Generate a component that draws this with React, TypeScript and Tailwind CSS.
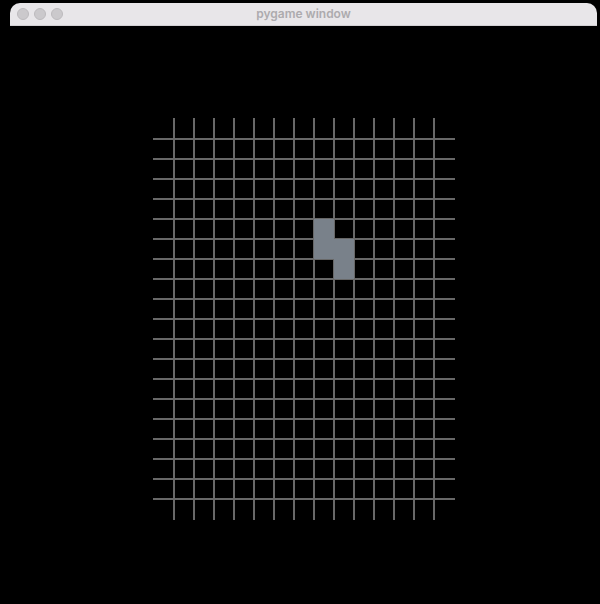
import React from "react";

// board geometry, as pygame draws it
const CELL = 20;
const COLS = 15;
const ROWS = 20;
const piece: [number, number][] = [
  [8, 5],
  [8, 6],
  [9, 6],
  [9, 7],
];

function Board() {
  const w = COLS * CELL + 2;
  const h = ROWS * CELL + 2;
  return (
    <svg width={w} height={h} viewBox={`0 0 ${w} ${h}`} className="block">
      {Array.from({ length: COLS - 1 }, (_, i) => (
        <rect key={"v" + i} x={(i + 1) * CELL} y={0} width={2} height={h} fill="#686868" />
      ))}
      {Array.from({ length: ROWS - 1 }, (_, j) => (
        <rect key={"h" + j} x={0} y={(j + 1) * CELL} width={w} height={2} fill="#686868" />
      ))}
      {piece.map(([c, r]) => (
        <rect key={c + "-" + r} x={c * CELL + 1} y={r * CELL + 1} width={CELL} height={CELL} fill="#79818a" />
      ))}
    </svg>
  );
}

export default function App() {
  return (
    <div className="w-[600px] h-[604px] bg-black overflow-hidden pt-[3px]">
      {/* title bar */}
      <div className="ml-[10px] w-[587px] h-[23px] rounded-t-[10px] bg-[#e8e6e9] border-b border-[#d2d0d3] grid grid-cols-[1fr_auto_1fr] items-center">
        <div className="flex items-center gap-[5px] pl-[7px]">
          <span className="w-3 h-3 rounded-full bg-[#cbc9cc] border border-[#bdbbbe]" />
          <span className="w-3 h-3 rounded-full bg-[#cbc9cc] border border-[#bdbbbe]" />
          <span className="w-3 h-3 rounded-full bg-[#cbc9cc] border border-[#bdbbbe]" />
        </div>
        <span className="text-[12px] font-semibold text-[#adabae] leading-none font-['Inter',sans-serif]">
          pygame window
        </span>
        <div />
      </div>

      {/* game surface */}
      <div className="pl-[153px] pt-[92px]">
        <Board />
      </div>
    </div>
  );
}
